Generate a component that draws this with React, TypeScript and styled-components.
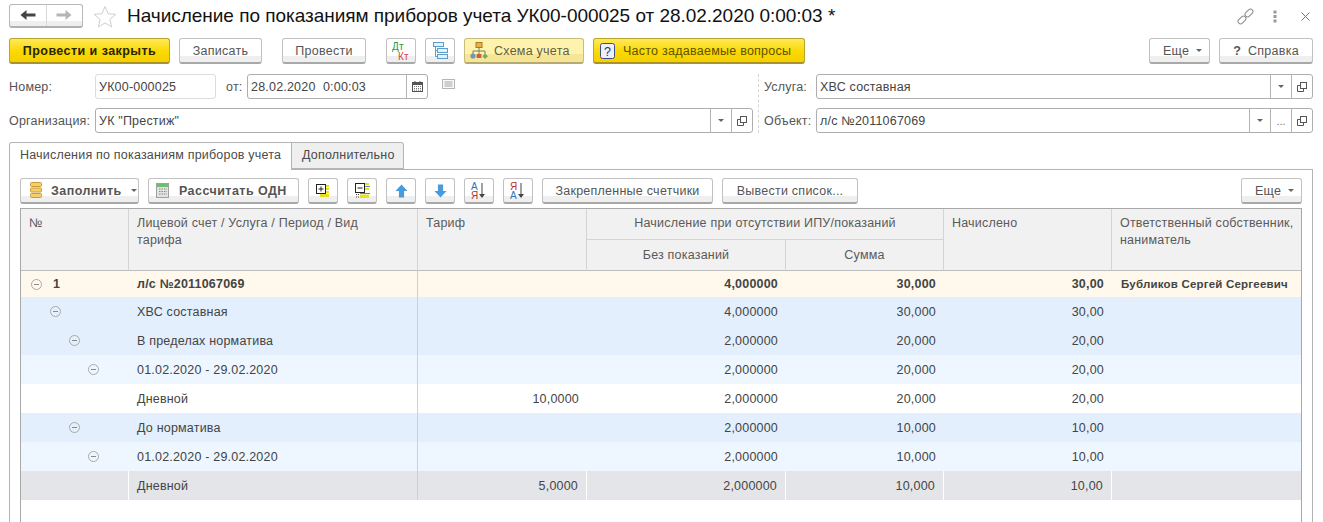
import React from "react";
import styled, { createGlobalStyle } from "styled-components";

const GlobalStyle = createGlobalStyle`
  html, body {
    margin: 0;
    padding: 0;
    background: #fff;
    overflow: hidden;
  }
  body {
    font-family: "Liberation Sans", Arial, sans-serif;
    font-size: 12px;
    color: #4b4b4b;
  }
`;

const Page = styled.div`
  width: 1323px;
  height: 522px;
  box-sizing: border-box;
  padding: 4px 10px 0 9px;
  display: flex;
  flex-direction: column;
  overflow: hidden;
`;

const TitleBar = styled.div`
  display: flex;
  align-items: center;
  height: 24px;
`;

const NavGroup = styled.div`
  display: flex;
  width: 74px;
  height: 24px;
  box-sizing: border-box;
  border: 1px solid #b8b8b8;
  border-bottom: 2px solid #b0b0b0;
  border-radius: 3px;
  background: linear-gradient(#fff 0 76%, #efefef 76%);
`;

const NavCell = styled.div<{ $sep?: boolean }>`
  flex: 1;
  display: flex;
  align-items: center;
  justify-content: center;
  padding-bottom: 1px;
  border-left: ${(p) => (p.$sep ? "1px solid #d8d8d8" : "none")};
`;

const StarWrap = styled.div`
  display: flex;
  margin-left: 10px;
`;

const Title = styled.h1`
  margin: 0 0 0 10px;
  font-size: 19px;
  font-weight: 400;
  letter-spacing: -0.03px;
  line-height: 24px;
  color: #111;
  white-space: nowrap;
`;

const TitleActions = styled.div`
  margin-left: auto;
  display: flex;
  align-items: center;
  gap: 24px;
  padding-right: 3px;
`;

const LinkWrap = styled.div`
  display: flex;
  margin-right: -5px;
`;

const Toolbar = styled.div`
  display: flex;
  align-items: center;
  gap: 20px;
  margin-top: 10px;
  height: 26px;
`;

const Group = styled.div`
  display: flex;
  gap: 9px;
`;

const PushRight = styled(Group)`
  margin-left: auto;
`;

type Tone = "plain" | "main" | "soft" | "gold";

const toneText: Record<Tone, string> = {
  plain: "#555",
  main: "#2a2400",
  soft: "#66603a",
  gold: "#5c5200",
};

const Button = styled.div<{ $w: number; $tone?: Tone; $bold?: boolean; $pad?: number; $gap?: number }>`
  width: ${(p) => p.$w}px;
  height: 26px;
  box-sizing: border-box;
  display: flex;
  align-items: center;
  justify-content: ${(p) => (p.$pad ? "flex-start" : "center")};
  gap: ${(p) => p.$gap ?? 7}px;
  padding-left: ${(p) => p.$pad ?? 0}px;
  border-radius: 3px;
  white-space: nowrap;
  font-size: 12.5px;
  letter-spacing: ${(p) => (p.$bold ? 0.45 : 0.25)}px;
  font-weight: ${(p) => (p.$bold ? 700 : 400)};
  color: ${(p) => toneText[p.$tone ?? "plain"]};
  border: 1px solid
    ${(p) =>
      p.$tone === "main" || p.$tone === "gold"
        ? "#b9a42c"
        : p.$tone === "soft"
          ? "#c9bd7c"
          : "#c2c2c2"};
  border-bottom: 2px solid
    ${(p) =>
      p.$tone === "main" || p.$tone === "gold"
        ? "#a8922a"
        : p.$tone === "soft"
          ? "#b5aa72"
          : "#a8a8a8"};
  background: ${(p) =>
    p.$tone === "main" || p.$tone === "gold"
      ? "linear-gradient(#ffe95a, #fbd900 55%, #f5cf00)"
      : p.$tone === "soft"
        ? "linear-gradient(#fdf2ae 0 65%, #f5e594 65%)"
        : "linear-gradient(#fff 0 72%, #efefef 72%)"};
`;

const Form = styled.div`
  display: flex;
  margin-top: 10px;
  height: 59px;
`;

const FormColumn = styled.div<{ $w: number }>`
  width: ${(p) => p.$w}px;
  display: flex;
  flex-direction: column;
  gap: 9px;
`;

const Divider = styled.div`
  width: 0;
  margin: 0 5px 0 5px;
  border-left: 1px dashed #d4d4d4;
`;

const FieldRow = styled.div`
  display: flex;
  align-items: center;
  height: 25px;
`;

const Label = styled.label<{ $w: number }>`
  width: ${(p) => p.$w}px;
  flex: none;
  font-size: 12.5px;
  letter-spacing: 0.2px;
  color: #555;
  white-space: nowrap;
`;

const Field = styled.div<{ $w?: number; $ro?: boolean }>`
  ${(p) => (p.$w ? `width: ${p.$w}px; flex: none;` : "flex: 1;")}
  height: 25px;
  box-sizing: border-box;
  display: flex;
  border: 1px solid ${(p) => (p.$ro ? "#dcdcdc" : "#aeaeae")};
  border-radius: 3px;
  background: #fff;
`;

const FieldText = styled.div`
  flex: 1;
  padding: 1px 0 0 3px;
  line-height: 23px;
  font-size: 12.5px;
  letter-spacing: 0.2px;
  color: #444;
  white-space: pre;
`;

const FieldBtn = styled.div`
  width: 21px;
  box-sizing: border-box;
  flex: none;
  display: flex;
  align-items: center;
  justify-content: center;
  border-left: 1px solid #b4b4b4;
  color: #777;
  font-size: 11px;
`;

const Caret = styled.span`
  display: inline-block;
  width: 0;
  height: 0;
  border-left: 3px solid transparent;
  border-right: 3px solid transparent;
  border-top: 3px solid #666;
`;

const Gap = styled.div<{ $w: number }>`
  width: ${(p) => p.$w}px;
  flex: none;
`;

const NoteIcon = styled.div`
  margin: -5px 0 0 14px;
  display: flex;
`;

const Tabs = styled.div`
  display: flex;
  margin-top: 9px;
  height: 27px;
`;

const Tab = styled.div<{ $active?: boolean; $w: number }>`
  position: relative;
  z-index: 1;
  width: ${(p) => p.$w}px;
  height: ${(p) => (p.$active ? 28 : 27)}px;
  box-sizing: border-box;
  border: 1px solid #b4b4b4;
  border-left: ${(p) => (p.$active ? "1px solid #b4b4b4" : "none")};
  border-bottom: ${(p) => (p.$active ? "none" : "1px solid #b4b4b4")};
  border-radius: ${(p) => (p.$active ? "3px 0 0 0" : "0 3px 0 0")};
  background: ${(p) => (p.$active ? "#fff" : "#efefef")};
  line-height: 25px;
  padding-left: 10px;
  font-size: 12.5px;
  letter-spacing: 0.2px;
  color: #4b4b4b;
  white-space: nowrap;
`;

const Panel = styled.div`
  flex: 1;
  min-height: 0;
  display: flex;
  flex-direction: column;
  border: 1px solid #b4b4b4;
  border-bottom: none;
  padding: 8px 10px 0 10px;
`;

const PanelBar = styled.div`
  display: flex;
  gap: 9px;
  height: 26px;
`;

const TableBox = styled.div`
  flex: 1;
  min-height: 0;
  margin-top: 4px;
  border: 1px solid #a8a8a8;
  border-bottom: none;
`;

const Grid = styled.table`
  width: 1280px;
  table-layout: fixed;
  border-collapse: separate;
  border-spacing: 0;
`;

const Head = styled.th<{ $center?: boolean; $last?: boolean; $h?: number }>`
  height: ${(p) => p.$h ?? 31}px;
  box-sizing: border-box;
  padding: 6px 8px 0 8px;
  vertical-align: top;
  background: #f1f1f1;
  border-right: ${(p) => (p.$last ? "none" : "1px solid #d4d4d4")};
  border-bottom: 1px solid #d4d4d4;
  font-size: 12.5px;
  letter-spacing: 0.2px;
  line-height: 17px;
  font-weight: 400;
  color: #5a5a5a;
  white-space: nowrap;
  text-align: ${(p) => (p.$center ? "center" : "left")};
`;

const TallHead = styled(Head)`
  border-bottom: 1px solid #bdbdbd;
`;

const SubHead = styled(TallHead)`
  padding-top: 7px;
`;

type Shade = "total" | "blue" | "light" | "white" | "picked";

const rowColors: Record<Shade, string> = {
  total: "#fff9ed",
  blue: "#e3effd",
  light: "#eef7ff",
  white: "#ffffff",
  picked: "#e4e5e9",
};

const Row = styled.tr<{ $shade: Shade }>`
  background: ${(p) => rowColors[p.$shade]};
  color: #444;
  font-weight: ${(p) => (p.$shade === "total" ? 700 : 400)};
`;

const Cell = styled.td<{ $right?: boolean; $line?: "tariff" | "picked"; $tall?: boolean; $small?: boolean }>`
  height: ${(p) => (p.$tall ? 26 : 29)}px;
  box-sizing: border-box;
  padding: 0 8px 0 ${(p) => (p.$small ? 9 : 8)}px;
  font-size: ${(p) => (p.$small ? 11.5 : 12.5)}px;
  letter-spacing: 0.2px;
  white-space: nowrap;
  text-align: ${(p) => (p.$right ? "right" : "left")};
  border-right: ${(p) =>
    p.$line === "tariff"
      ? "1px solid #d0d0d0"
      : p.$line === "picked"
        ? "1px solid #fff"
        : "none"};
`;

const TreeCell = styled.div<{ $level: number }>`
  display: flex;
  align-items: center;
  gap: 11px;
  margin-left: ${(p) => 2 + p.$level * 19}px;
`;

const Minus = styled.span`
  position: relative;
  width: 9px;
  height: 9px;
  flex: none;
  border: 1px solid #a9a9a9;
  border-radius: 50%;
  &::after {
    content: "";
    position: absolute;
    left: 2px;
    right: 2px;
    top: 4px;
    height: 1px;
    background: #8a8a8a;
  }
`;

const ArrowBack = ({ color }: { color: string }) => (
  <svg width="16" height="12" viewBox="0 0 16 12">
    <path d="M0.5 6 L6.5 1 V4.5 H15.5 V7.5 H6.5 V11 Z" fill={color} />
  </svg>
);

const ArrowForward = ({ color }: { color: string }) => (
  <svg width="16" height="12" viewBox="0 0 16 12">
    <path d="M15.5 6 L9.5 1 V4.5 H0.5 V7.5 H9.5 V11 Z" fill={color} />
  </svg>
);

const StarIcon = () => (
  <svg width="24" height="23" viewBox="0 0 24 23">
    <path
      d="M12 1.5 L15 8.7 L22.8 9.3 L16.9 14.4 L18.7 22 L12 17.9 L5.3 22 L7.1 14.4 L1.2 9.3 L9 8.7 Z"
      fill="#fff"
      stroke="#cfcfcf"
    />
  </svg>
);

const LinkIcon = () => (
  <svg width="17" height="17" viewBox="0 0 17 17" fill="none" stroke="#8a8a8a" strokeWidth="1">
    <rect x="7.5" y="2.5" width="9" height="5" rx="2.5" transform="rotate(-45 12 5)" />
    <rect x="0.5" y="9.5" width="9" height="5" rx="2.5" transform="rotate(-45 5 12)" />
  </svg>
);

const DotsIcon = () => (
  <svg width="4" height="13" viewBox="0 0 4 13" fill="#9a9a9a">
    <rect x="0.5" y="0.5" width="3" height="3" />
    <rect x="0.5" y="5" width="3" height="3" />
    <rect x="0.5" y="9.5" width="3" height="3" />
  </svg>
);

const CloseIcon = () => (
  <svg width="9" height="9" viewBox="0 0 9 9" stroke="#707070" strokeWidth="1">
    <path d="M0.5 0.5 L8.5 8.5 M8.5 0.5 L0.5 8.5" />
  </svg>
);

const DtKtIcon = () => (
  <svg width="18" height="20" viewBox="0 0 18 20" fontFamily="Liberation Sans, sans-serif" fontSize="10">
    <text x="0" y="9" fill="#1f9a46">Дт</text>
    <text x="6" y="18.5" fill="#d2473c">Кт</text>
  </svg>
);

const StructIcon = () => (
  <svg width="16" height="17" viewBox="0 0 16 17" fill="#e3f1fb" stroke="#5c9cc9">
    <rect x="1.5" y="0.5" width="10" height="4" />
    <rect x="5.5" y="6.5" width="10" height="4" />
    <rect x="5.5" y="12.5" width="10" height="4" />
    <path d="M3.5 4.5 V14.5 H5.5 M3.5 8.5 H5.5" fill="none" />
  </svg>
);

const SchemeIcon = () => (
  <svg width="18" height="17" viewBox="0 0 18 17">
    <rect x="6" y="0.5" width="6" height="5" fill="#f0b040" stroke="#a57a2a" />
    <path d="M9 5.5 V9 M3 12 V9 H15 V12 M9 9 V12" stroke="#6b8a5a" fill="none" />
    <circle cx="3" cy="14" r="2.6" fill="#6f97b8" />
    <rect x="6.6" y="12" width="4.8" height="4" fill="#cf5d4d" />
    <path d="M15 11.5 L18 14.2 L15 17 L12.4 14.2 Z" fill="#6fae6a" />
  </svg>
);

const QuestionIcon = () => (
  <svg width="15" height="16" viewBox="0 0 15 16">
    <rect x="0.5" y="0.5" width="14" height="15" rx="2" fill="#eef0f8" stroke="#3d4a8a" />
    <text x="7.5" y="12.5" textAnchor="middle" fontFamily="Liberation Sans, sans-serif" fontSize="12.5" fill="#27316e">
      ?
    </text>
  </svg>
);

const CalendarIcon = () => (
  <svg width="11" height="11" viewBox="0 0 11 11">
    <rect x="0.5" y="1.5" width="10" height="9" fill="#fff" stroke="#555" />
    <rect x="0.5" y="1.5" width="10" height="2.5" fill="#555" />
    <rect x="2.5" y="0" width="1" height="2" fill="#555" />
    <rect x="7.5" y="0" width="1" height="2" fill="#555" />
    <path d="M2 5.5 H9 M2 7.5 H9 M2 9.2 H9" stroke="#777" strokeDasharray="1 1" />
  </svg>
);

const OpenIcon = () => (
  <svg width="12" height="12" viewBox="0 0 12 12" fill="none" stroke="#555">
    <rect x="4.5" y="1.5" width="6" height="6" />
    <path d="M4.5 4.5 H1.5 V10.5 H7.5 V7.5" />
  </svg>
);

const NoteSvg = () => (
  <svg width="13" height="10" viewBox="0 0 13 10">
    <rect x="0.5" y="0.5" width="12" height="9" fill="#f8f8f8" stroke="#b5b5b5" />
    <path d="M2.5 3 H10.5 M2.5 5 H10.5 M2.5 7 H10.5" stroke="#a5a5a5" />
  </svg>
);

const FillIcon = () => (
  <svg width="12" height="17" viewBox="0 0 12 17" fill="#f4cf6a" stroke="#c99a3a">
    <rect x="0.5" y="0.5" width="11" height="4" rx="1" />
    <rect x="0.5" y="6" width="11" height="4" rx="1" />
    <rect x="0.5" y="11.5" width="11" height="4" rx="1" />
  </svg>
);

const CalcIcon = () => (
  <svg width="13" height="15" viewBox="0 0 13 15">
    <rect x="0.5" y="0.5" width="12" height="14" fill="#e2e2e2" stroke="#a0a0a0" />
    <rect x="1" y="1" width="11" height="3" fill="#6cc06c" />
    <path d="M3 6 H11 M3 8.5 H11 M3 11 H11" stroke="#8a8a8a" strokeDasharray="1.5 1" />
  </svg>
);

const ExpandIcon = () => (
  <svg width="14" height="13" viewBox="0 0 14 13">
    <rect x="9" y="1" width="4" height="2" fill="#e6e01e" />
    <rect x="9" y="4" width="4" height="2" fill="#e6e01e" />
    <rect x="9" y="7" width="4" height="2" fill="#e6e01e" />
    <rect x="4" y="10" width="9" height="3" fill="#e6e01e" />
    <rect x="0.5" y="0.5" width="9" height="9" fill="#fff" stroke="#222" />
    <path d="M2.5 5 H7.5 M5 2.5 V7.5" stroke="#222" />
  </svg>
);

const CollapseIcon = () => (
  <svg width="15" height="15" viewBox="0 0 15 15">
    <rect x="10" y="0" width="4" height="2" fill="#e6e01e" />
    <path d="M10 3.5 H15 M5 10.5 H15" stroke="#3a8fd0" />
    <rect x="10" y="5" width="4" height="2" fill="#e6e01e" />
    <rect x="5" y="11.5" width="9" height="3.5" fill="#e6e01e" />
    <path d="M1 11.5 H4 M1 14 H4" stroke="#444" strokeDasharray="1 1" />
    <rect x="0.5" y="0.5" width="9" height="9" fill="#fff" stroke="#222" />
    <path d="M2.5 5 H7.5" stroke="#222" />
  </svg>
);

const UpIcon = () => (
  <svg width="13" height="14" viewBox="0 0 14 15">
    <path d="M7 0.5 L13.5 7.5 H9.8 V14.5 H4.2 V7.5 H0.5 Z" fill="#4c9bd8" />
  </svg>
);

const DownIcon = () => (
  <svg width="13" height="14" viewBox="0 0 14 15">
    <path d="M7 14.5 L13.5 7.5 H9.8 V0.5 H4.2 V7.5 H0.5 Z" fill="#4c9bd8" />
  </svg>
);

const SortIcon = ({ top, bottom, topColor, bottomColor }: { top: string; bottom: string; topColor: string; bottomColor: string }) => (
  <svg width="16" height="18" viewBox="0 0 16 18" fontFamily="Liberation Sans, sans-serif" fontSize="10">
    <text x="0" y="8" fill={topColor}>{top}</text>
    <text x="0" y="17" fill={bottomColor}>{bottom}</text>
    <path d="M11 1 V13" stroke="#444" />
    <path d="M8 12 H14 L11 16 Z" fill="#444" />
  </svg>
);

type DataRow = {
  shade: Shade;
  level: number;
  open: boolean;
  num?: string;
  name: string;
  tariff?: string;
  without: string;
  sum: string;
  total: string;
  owner?: string;
};

const rows: DataRow[] = [
  { shade: "total", level: 0, open: true, num: "1", name: "л/с №2011067069", without: "4,000000", sum: "30,000", total: "30,00", owner: "Бубликов Сергей Сергеевич" },
  { shade: "blue", level: 1, open: true, name: "ХВС составная", without: "4,000000", sum: "30,000", total: "30,00" },
  { shade: "blue", level: 2, open: true, name: "В пределах норматива", without: "2,000000", sum: "20,000", total: "20,00" },
  { shade: "light", level: 3, open: true, name: "01.02.2020 - 29.02.2020", without: "2,000000", sum: "20,000", total: "20,00" },
  { shade: "white", level: 4, open: false, name: "Дневной", tariff: "10,0000", without: "2,000000", sum: "20,000", total: "20,00" },
  { shade: "blue", level: 2, open: true, name: "До норматива", without: "2,000000", sum: "10,000", total: "10,00" },
  { shade: "light", level: 3, open: true, name: "01.02.2020 - 29.02.2020", without: "2,000000", sum: "10,000", total: "10,00" },
  { shade: "picked", level: 4, open: false, name: "Дневной", tariff: "5,0000", without: "2,000000", sum: "10,000", total: "10,00" },
];

export default function App() {
  return (
    <Page>
      <GlobalStyle />
      <TitleBar>
        <NavGroup>
          <NavCell>
            <ArrowBack color="#444" />
          </NavCell>
          <NavCell $sep>
            <ArrowForward color="#b5b5b5" />
          </NavCell>
        </NavGroup>
        <StarWrap>
          <StarIcon />
        </StarWrap>
        <Title>Начисление по показаниям приборов учета УК00-000025 от 28.02.2020 0:00:03 *</Title>
        <TitleActions>
          <LinkWrap>
            <LinkIcon />
          </LinkWrap>
          <DotsIcon />
          <CloseIcon />
        </TitleActions>
      </TitleBar>

      <Toolbar>
        <Group>
          <Button $w={161} $tone="main" $bold>Провести и закрыть</Button>
          <Button $w={83}>Записать</Button>
        </Group>
        <Group>
          <Button $w={84}>Провести</Button>
        </Group>
        <Group>
          <Button $w={30}><DtKtIcon /></Button>
          <Button $w={30}><StructIcon /></Button>
          <Button $w={120} $tone="soft" $pad={5} $gap={6}><SchemeIcon />Схема учета</Button>
          <Button $w={212} $tone="gold" $pad={6} $gap={8}><QuestionIcon />Часто задаваемые вопросы</Button>
        </Group>
        <PushRight>
          <Button $w={61} $pad={13}>Еще <Caret /></Button>
          <Button $w={94}><strong>?</strong> Справка</Button>
        </PushRight>
      </Toolbar>

      <Form>
        <FormColumn $w={744}>
          <FieldRow>
            <Label $w={86}>Номер:</Label>
            <Field $w={121} $ro>
              <FieldText>УК00-000025</FieldText>
            </Field>
            <Gap $w={10} />
            <Label $w={21}>от:</Label>
            <Field $w={181}>
              <FieldText>28.02.2020  0:00:03</FieldText>
              <FieldBtn><CalendarIcon /></FieldBtn>
            </Field>
            <NoteIcon><NoteSvg /></NoteIcon>
          </FieldRow>
          <FieldRow>
            <Label $w={86}>Организация:</Label>
            <Field>
              <FieldText>УК "Престиж"</FieldText>
              <FieldBtn><Caret /></FieldBtn>
              <FieldBtn><OpenIcon /></FieldBtn>
            </Field>
          </FieldRow>
        </FormColumn>
        <Divider />
        <FormColumn $w={549}>
          <FieldRow>
            <Label $w={52}>Услуга:</Label>
            <Field>
              <FieldText>ХВС составная</FieldText>
              <FieldBtn><Caret /></FieldBtn>
              <FieldBtn><OpenIcon /></FieldBtn>
            </Field>
          </FieldRow>
          <FieldRow>
            <Label $w={52}>Объект:</Label>
            <Field>
              <FieldText>л/с №2011067069</FieldText>
              <FieldBtn><Caret /></FieldBtn>
              <FieldBtn>...</FieldBtn>
              <FieldBtn><OpenIcon /></FieldBtn>
            </Field>
          </FieldRow>
        </FormColumn>
      </Form>

      <Tabs>
        <Tab $active $w={283}>Начисления по показаниям приборов учета</Tab>
        <Tab $w={112}>Дополнительно</Tab>
      </Tabs>

      <Panel>
        <PanelBar>
          <Button $w={119} $bold $pad={9} $gap={9}><FillIcon />Заполнить <Caret /></Button>
          <Button $w={151} $bold $pad={7} $gap={10}><CalcIcon />Рассчитать ОДН</Button>
          <Button $w={30}><ExpandIcon /></Button>
          <Button $w={30}><CollapseIcon /></Button>
          <Button $w={30}><UpIcon /></Button>
          <Button $w={30}><DownIcon /></Button>
          <Button $w={30}><SortIcon top="А" bottom="Я" topColor="#2f74b5" bottomColor="#b5352c" /></Button>
          <Button $w={30}><SortIcon top="Я" bottom="А" topColor="#b5352c" bottomColor="#2f74b5" /></Button>
          <Button $w={171}>Закрепленные счетчики</Button>
          <Button $w={136}>Вывести список...</Button>
          <PushRight>
            <Button $w={61} $pad={13}>Еще <Caret /></Button>
          </PushRight>
        </PanelBar>

        <TableBox>
          <Grid>
            <colgroup>
              <col style={{ width: 108 }} />
              <col style={{ width: 289 }} />
              <col style={{ width: 169 }} />
              <col style={{ width: 199 }} />
              <col style={{ width: 158 }} />
              <col style={{ width: 168 }} />
              <col />
            </colgroup>
            <thead>
              <tr>
                <TallHead rowSpan={2}>№</TallHead>
                <TallHead rowSpan={2}>Лицевой счет / Услуга / Период / Вид<br />тарифа</TallHead>
                <TallHead rowSpan={2}>Тариф</TallHead>
                <Head colSpan={2} $center>Начисление при отсутствии ИПУ/показаний</Head>
                <TallHead rowSpan={2}>Начислено</TallHead>
                <TallHead rowSpan={2} $last>Ответственный собственник,<br />наниматель</TallHead>
              </tr>
              <tr>
                <SubHead $center>Без показаний</SubHead>
                <SubHead $center>Сумма</SubHead>
              </tr>
            </thead>
            <tbody>
              {rows.map((r, i) => {
                const picked = r.shade === "picked" ? "picked" : undefined;
                return (
                  <Row key={i} $shade={r.shade}>
                    <Cell $tall={i === 0} $line={picked}>
                      {r.open && (
                        <TreeCell $level={r.level}>
                          <Minus />
                          {r.num}
                        </TreeCell>
                      )}
                    </Cell>
                    <Cell $tall={i === 0} $line="tariff">{r.name}</Cell>
                    <Cell $tall={i === 0} $right $line={picked}>{r.tariff}</Cell>
                    <Cell $tall={i === 0} $right $line={picked}>{r.without}</Cell>
                    <Cell $tall={i === 0} $right $line={picked}>{r.sum}</Cell>
                    <Cell $tall={i === 0} $right $line={picked}>{r.total}</Cell>
                    <Cell $tall={i === 0} $small>{r.owner}</Cell>
                  </Row>
                );
              })}
            </tbody>
          </Grid>
        </TableBox>
      </Panel>
    </Page>
  );
}
